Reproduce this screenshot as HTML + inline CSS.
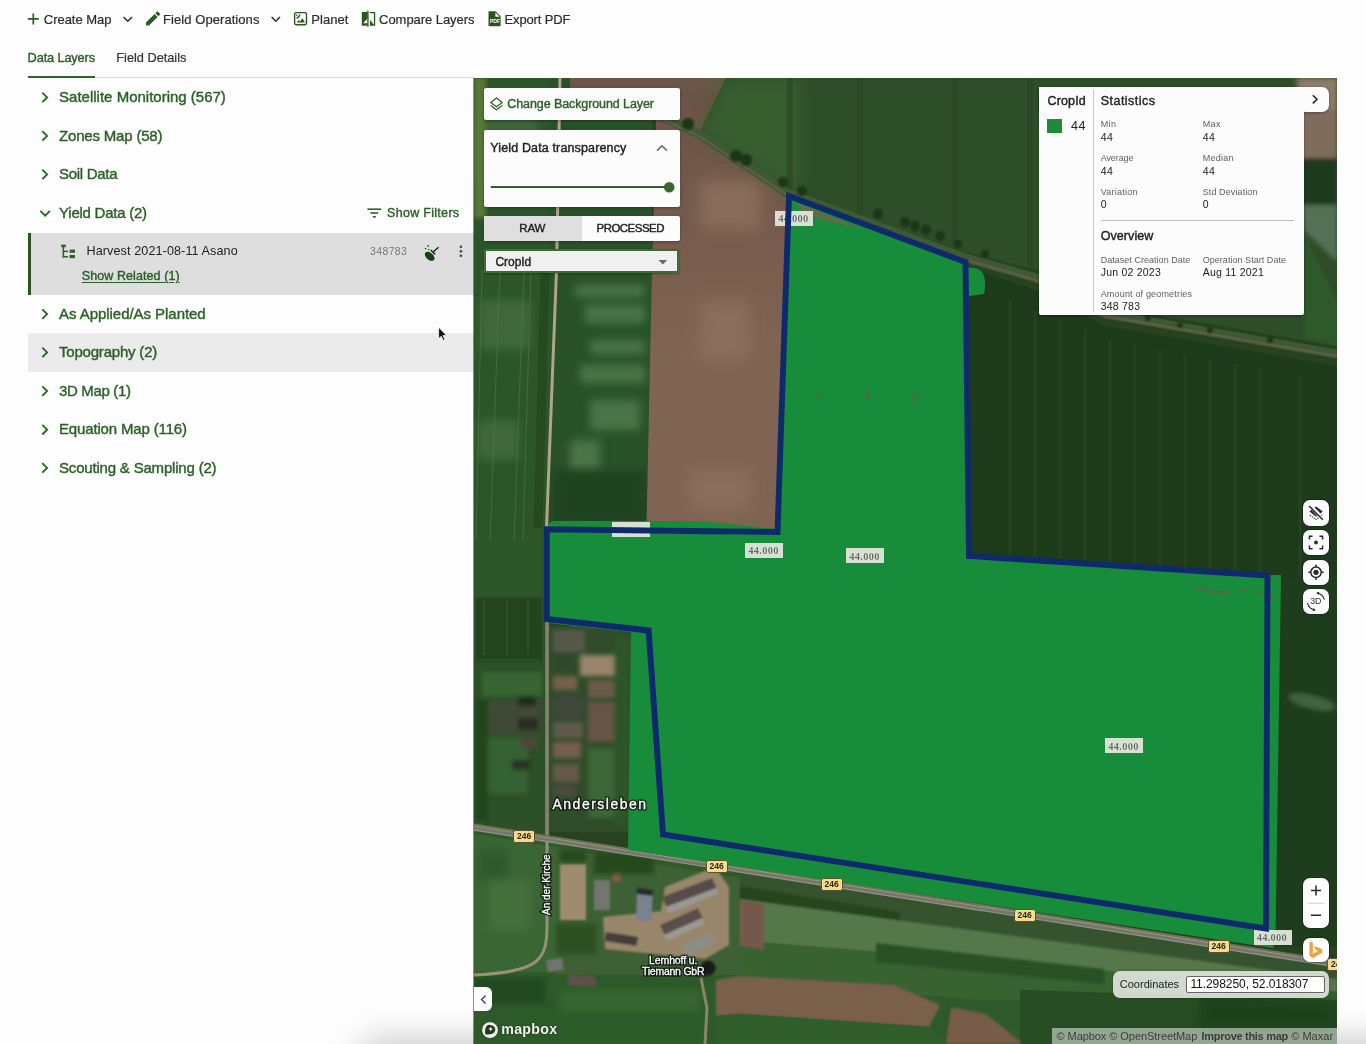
<!DOCTYPE html>
<html lang="en">
<head>
<meta charset="utf-8">
<title>Field Map</title>
<style>
html,body{margin:0;padding:0;}
body{width:1366px;height:1044px;position:relative;overflow:hidden;background:#fdfdfd;font-family:"Liberation Sans",sans-serif;}
.a{position:absolute;}
.t{position:absolute;white-space:pre;line-height:1;font-family:"Liberation Sans",sans-serif;}
.m{-webkit-text-stroke:0.4px currentColor;}
.m2{-webkit-text-stroke:0.2px currentColor;}
svg{position:absolute;overflow:visible;}
.btn{position:absolute;background:#fdfdfd;border-radius:7px;box-shadow:0 0 0 1px rgba(0,0,0,.22);}
.panel{position:absolute;border-radius:2px;background:#fcfcfc;box-shadow:0 1px 3px rgba(0,0,0,.35);}
</style>
</head>
<body>
<div id="root" style="position:absolute;left:0;top:0;width:1366px;height:1044px;will-change:transform;">
<!-- toolbar icons -->
<svg class="a" style="left:0;top:0" width="600" height="40" viewBox="0 0 600 40">
  <g fill="none" stroke="#2c5a24" stroke-width="1.7">
    <path d="M33.3 13.4V24.4M27.8 18.9H38.8"/>
  </g>
  <g fill="none" stroke="#2b2b2b" stroke-width="1.5">
    <path d="M123.6 17l4.2 4.2 4.2-4.2"/>
    <path d="M271.6 17l4.2 4.2 4.2-4.2"/>
  </g>
  <!-- pencil -->
  <g fill="#2c5a24">
    <path d="M146 25.6v-3l8.6-8.6 3 3-8.600 8.600zM155.400 13.200l1.400-1.400a1 1 0 0 1 1.400 0l1.600 1.600a1 1 0 0 1 0 1.400l-1.400 1.400z"/>
  </g>
  <!-- planet/image icon -->
  <g fill="none" stroke="#2c5522" stroke-width="1.4">
    <rect x="294.6" y="12.6" width="11.900" height="12.100" rx="1.600"/>
    <path d="M299.900 14.400a4.600 4.600 0 0 1-3.400 3.900" stroke-width="1.200"/>
  </g>
  <circle cx="296.800" cy="15.300" r=".8" fill="#2c5522"/>
  <path fill="#2c5522" d="M296.900 22.500l1.700-2.500 1.300 1.600 2.400-3.300 2.800 4.200z"/>
  <!-- compare icon -->
  <g fill="#2c5522">
    <path d="M361.800 12h5.600v13.700h-5.600z"/>
    <rect x="367.200" y="10.700" width="1.400" height="16"/>
    <path d="M370 19.700l3.900 5.300h-3.900z"/>
  </g>
  <path fill="#fdfdfd" d="M363.200 23.200l4-4.500v4.500z"/>
  <path d="M369.900 12.650h4.650v12.400h-4.650" fill="none" stroke="#2c5522" stroke-width="1.300"/>
  <!-- pdf icon -->
  <path fill="#2c5522" d="M489.300 11.200h6.300l5 5v9.200a.8.800 0 0 1-.8.800h-10.500a.8.800 0 0 1-.8-.8v-13.400a.8.800 0 0 1 .8-.8z"/>
  <path fill="#fdfdfd" d="M495.400 12.600v4.200h4.200z"/>
</svg>
<span class="t" style="left:489.900px;top:19.300px;font-size:5.200px;font-weight:700;color:#fdfdfd;letter-spacing:-.1px">PDF</span>

<!-- tabs line -->
<div class="a" style="left:28px;top:77px;width:446px;height:1px;background:#dcdcdc"></div>
<div class="a" style="left:28px;top:75.5px;width:67px;height:2.5px;background:#2d6428"></div>

<!-- rows -->
<div class="a" style="left:28px;top:233px;width:446px;height:62px;background:#dedede"></div>
<div class="a" style="left:28px;top:233px;width:2.6px;height:62px;background:#2b5220"></div>
<div class="a" style="left:28px;top:333px;width:446px;height:38.5px;background:#ebebeb"></div>

<svg class="a" style="left:0;top:80px" width="480" height="420" viewBox="0 80 480 420">
  <g fill="none" stroke="#2d6428" stroke-width="1.9">
    <path d="M42.3 92.6l4.8 4.8-4.8 4.8"/>
    <path d="M42.3 131.1l4.8 4.8-4.8 4.8"/>
    <path d="M42.3 169.6l4.8 4.8-4.8 4.8"/>
    <path d="M40.4 210.8l4.8 4.8 4.8-4.8"/>
    <path d="M42.3 309.3l4.8 4.8-4.8 4.8"/>
    <path d="M42.3 347.6l4.8 4.8-4.8 4.8"/>
    <path d="M42.3 386.3l4.8 4.8-4.8 4.8"/>
    <path d="M42.3 424.9l4.8 4.8-4.8 4.8"/>
    <path d="M42.3 463.1l4.8 4.8-4.8 4.8"/>
  </g>
  <!-- filter icon -->
  <g fill="#2d6428">
    <rect x="367.4" y="208.4" width="13.7" height="1.6"/>
    <rect x="370.4" y="212.2" width="7.8" height="1.6"/>
    <rect x="372.8" y="216" width="3" height="1.6"/>
  </g>
  <!-- tree icon -->
  <g fill="#2d6428">
    <rect x="61.2" y="244.6" width="4.6" height="2.6"/>
    <rect x="62.6" y="247" width="1.5" height="10.5"/>
    <rect x="62.6" y="250.6" width="5.4" height="1.5"/>
    <rect x="62.6" y="256" width="5.4" height="1.5"/>
    <rect x="69.6" y="249.6" width="5.4" height="3.2"/>
    <rect x="69.6" y="255" width="5.4" height="3.2"/>
  </g>
  <!-- brush icon -->
  <g fill="#1b3d1a">
    <ellipse cx="429.700" cy="256.300" rx="5.700" ry="3.500" transform="rotate(42 429.700 256.300)"/>
    <circle cx="428.200" cy="245.900" r=".8"/><circle cx="425.600" cy="248.600" r=".8"/><circle cx="428.800" cy="249.500" r=".7"/>
  </g>
  <path d="M430.600 250L435.200 254.400M433 252.100L438.600 247.300" stroke="#1b3d1a" stroke-width="1.500" fill="none"/>
  <!-- dots -->
  <g fill="#4a4a4a"><circle cx="460.9" cy="246.8" r="1.35"/><circle cx="460.9" cy="251.3" r="1.35"/><circle cx="460.9" cy="255.8" r="1.35"/></g>
  <!-- cursor -->
  <path d="M438.6 327.2v11.6l2.7-2.5 1.9 4.3 1.8-.8-1.9-4.2h3.7z" fill="#111" stroke="#fff" stroke-width=".8"/>
</svg>
<!-- bottom shade -->
<div class="a" style="left:372px;top:1054px;width:1076px;height:30px;border-radius:30px;box-shadow:0 0 30px 18px rgba(0,0,0,.18)"></div>
<!-- map -->
<div class="a" style="left:474px;top:78px;width:863px;height:966px;overflow:hidden;background:#26421f">
<svg style="left:0;top:0" width="863" height="966" viewBox="474 78 863 966">
  <defs>
    <linearGradient id="brg" x1="0" y1="78" x2="0" y2="532" gradientUnits="userSpaceOnUse"><stop offset="0" stop-color="#6a5246"/><stop offset=".35" stop-color="#775c4d"/><stop offset=".6" stop-color="#7f6453"/><stop offset="1" stop-color="#7f6453"/></linearGradient>
    <filter id="b2" x="-10%" y="-10%" width="120%" height="120%"><feGaussianBlur stdDeviation="2"/></filter>
    <filter id="b4" x="-10%" y="-10%" width="120%" height="120%"><feGaussianBlur stdDeviation="4"/></filter>
    <filter id="b8" x="-20%" y="-20%" width="140%" height="140%"><feGaussianBlur stdDeviation="8"/></filter>
    <filter id="b1" x="-10%" y="-10%" width="120%" height="120%"><feGaussianBlur stdDeviation="0.8"/></filter>
  </defs>
  <!-- far-left strip -->
  <rect x="474" y="78" width="76" height="760" fill="#2c5529"/>
  <g filter="url(#b4)" fill="#4a7045" opacity=".7">
    <rect x="478" y="120" width="60" height="60"/><rect x="480" y="300" width="50" height="50"/><rect x="478" y="420" width="40" height="40"/>
  </g>
  <g stroke="#55774d" stroke-width="1" opacity=".6"><path d="M482 270L476 540M500 270L490 540M524 270L514 540M531 270L523 540"/></g>
  <rect x="474" y="78" width="12" height="140" fill="#587838" filter="url(#b2)"/>
  <!-- left field -->
  <rect x="550" y="78" width="102" height="450" fill="#29512a"/>
  <g filter="url(#b4)" fill="#527d4f" opacity=".8">
    <rect x="575" y="285" width="70" height="12"/><rect x="585" y="305" width="60" height="18"/>
    <rect x="590" y="340" width="55" height="14"/><rect x="580" y="365" width="65" height="18"/>
    <rect x="590" y="400" width="50" height="30"/><rect x="570" y="440" width="30" height="30"/>
  </g>
  <rect x="552" y="470" width="96" height="56" fill="#1f3d1d" opacity=".7" filter="url(#b4)"/>
  <!-- hedge along track -->
  <path d="M545 270L538 528" stroke="#25471f" stroke-width="9" opacity=".8"/>
  <!-- track -->
  <path d="M560 78L556.5 270L546.5 528" stroke="#b3a389" stroke-width="3" fill="none"/>
  <!-- brown field -->
  <path d="M657 78H726L699 134L787 195L777 532L646.5 527L652 270L656 120Z" fill="url(#brg)"/>
  <path d="M570 78H726L720 90H570Z" fill="#6b5748"/>
  <g filter="url(#b8)" fill="#8d725f" opacity=".8">
    <rect x="700" y="300" width="50" height="60"/><rect x="690" y="470" width="60" height="40"/><rect x="700" y="180" width="60" height="50"/>
  </g>
  <!-- upper right field -->
  <path d="M726 78H1337V346L1105 306L1036 270L966 252L788 190L699 134Z" fill="#2e4e29"/>
  <path d="M726 78H800V196L699 134Z" fill="#3a6230" filter="url(#b8)" opacity=".8"/>
  <g stroke="#26431f" stroke-width="6" opacity=".5"><path d="M790 78V190M860 78V215M955 78V245M1030 78V270"/></g>
  <!-- hedge / track band -->
  <path d="M660 116L699 134L787 193L966 258L1036 278L1105 314L1337 354" stroke="#3d5a35" stroke-width="9" fill="none"/>
  <path d="M660 118L699 136L787 195L966 260L1036 280L1105 316L1337 356" stroke="#5d5c46" stroke-width="2.500" fill="none"/>
  <g fill="#1b3418" filter="url(#b1)">
    <circle cx="688" cy="124" r="6"/><circle cx="736" cy="156" r="6"/><circle cx="746" cy="160" r="6"/><circle cx="783" cy="182" r="5"/><circle cx="802" cy="191" r="5"/>
    <circle cx="878" cy="214" r="5"/><circle cx="905" cy="222" r="5"/><circle cx="915" cy="226" r="5"/><circle cx="926" cy="230" r="5"/><circle cx="940" cy="236" r="5"/><circle cx="958" cy="244" r="4"/><circle cx="985" cy="254" r="4"/>
    <circle cx="1148" cy="318" r="3"/><circle cx="1180" cy="325" r="3"/><circle cx="1210" cy="330" r="3"/><circle cx="1270" cy="340" r="3"/>
  </g>
  <!-- right strip near stats -->
  <g filter="url(#b2)">
    <path d="M1296 78H1337V165H1300Z" fill="#7f6d5c"/>
    <path d="M1300 78H1337V110H1300Z" fill="#8c7b69"/>
    <path d="M1300 158H1337V205H1300Z" fill="#1f3a1c"/>
    <path d="M1302 205H1337V262L1304 230Z" fill="#556f55"/>
    <path d="M1304 235L1337 300V345L1304 338Z" fill="#2f5a2a"/>
  </g>
  <!-- dark right field -->
  <path d="M969 268L1036 290L1105 326L1337 366V600H1268V577L969 556Z" fill="#1d3a1b"/>
  <g stroke="#2c4a28" stroke-width="3" opacity=".5"><path d="M1010 300V555M1035 310V557M1060 320V559M1085 330V560M1110 340V562M1135 345V564M1160 350V566M1185 355V568M1210 360V570M1235 364V572M1260 368V574M1300 376V600"/></g>
  <!-- right strip -->
  <rect x="1268" y="577" width="69" height="370" fill="#1e3d1c"/>
  <ellipse cx="1312" cy="702" rx="24" ry="7" transform="rotate(14 1312 702)" fill="#50704a" opacity=".75" filter="url(#b2)"/>
  <path d="M1290 585V940" stroke="#2b4a27" stroke-width="8" opacity=".6" filter="url(#b2)"/>
  <!-- village -->
  <rect x="474" y="596" width="72" height="240" fill="#2c5028"/>
  <rect x="550" y="626" width="84" height="206" fill="#304c2a"/>
  <rect x="476" y="598" width="66" height="64" fill="#22441f"/>
  <g stroke="#3a5f35" stroke-width="1.200" opacity=".8"><path d="M484 600V655M507 600V655M528 600V655M476 660H540"/></g>
  <g filter="url(#b2)">
    <rect x="482" y="672" width="60" height="24" fill="#376633"/>
    <rect x="484" y="700" width="58" height="34" fill="#3f4a36"/>
    <rect x="484" y="738" width="44" height="56" fill="#346230"/>
    <rect x="476" y="700" width="12" height="120" fill="#24451f"/>
    <rect x="580" y="655" width="36" height="21" fill="#97846a"/>
    <rect x="588" y="680" width="26" height="18" fill="#6b5a48"/>
    <rect x="588" y="702" width="26" height="40" fill="#665446"/>
    <rect x="588" y="748" width="26" height="70" fill="#3a6634"/>
    <rect x="553" y="630" width="32" height="22" fill="#54584a"/>
    <rect x="553" y="656" width="24" height="16" fill="#2f4a2a"/>
    <rect x="553" y="676" width="24" height="14" fill="#75604a"/>
    <rect x="553" y="696" width="30" height="22" fill="#40463a"/>
    <rect x="553" y="722" width="30" height="16" fill="#5f594c"/>
    <rect x="553" y="742" width="28" height="16" fill="#74604e"/>
    <rect x="553" y="764" width="26" height="18" fill="#66584a"/>
    <rect x="553" y="786" width="22" height="10" fill="#4f4a40"/>
    <rect x="518" y="696" width="18" height="10" fill="#222c1d"/>
    <rect x="518" y="718" width="20" height="12" fill="#262f22"/>
    <rect x="520" y="738" width="18" height="10" fill="#4e463a"/>
    <rect x="512" y="760" width="18" height="10" fill="#2a3324"/>
    <rect x="614" y="636" width="15" height="190" fill="#2d5529"/>
  </g>
  <!-- village road -->
  <path d="M547 616V838" stroke="#85846f" stroke-width="3.600"/>
  <!-- below the road -->
  <path d="M474 830L1337 967V1044H474Z" fill="#2f5a2a"/>
  <path d="M474 834L560 848V972H474Z" fill="#3a6634"/>
  <g filter="url(#b4)"><rect x="490" y="880" width="40" height="50" fill="#4a7440" opacity=".7"/><rect x="478" y="850" width="30" height="30" fill="#2c5629" opacity=".8"/></g>
  <path d="M556 848L740 878V975H556Z" fill="#3d6034"/>
  <path d="M740 873L1337 968V990L740 900Z" fill="#35532e"/>
  <path d="M740 886L900 912V922L740 899Z" fill="#25441f" filter="url(#b1)"/>
  <path d="M740 899L1337 979V992L1000 962L740 941Z" fill="#55774a" filter="url(#b1)"/>
  <path d="M740 941L1000 962L1337 992V1030L740 980Z" fill="#38622f"/>
  <path d="M876 943L1104 969V984L876 962Z" fill="#2a5127" filter="url(#b1)"/>
  <path d="M740 900L764 904V950L740 946Z" fill="#75594b" filter="url(#b1)"/>
  <path d="M474 976H716V1044H474Z" fill="#2c5a28"/>
  <path d="M474 978H545V1004H474Z" fill="#234a20" filter="url(#b2)"/>
  <path d="M560 990H700V1012H560Z" fill="#3a6a34" filter="url(#b4)" opacity=".8"/>
  <path d="M716 1000H1337V1044H716Z" fill="#2d5a29"/>
  <path d="M1020 990L1337 1000V1044H1020Z" fill="#264d23"/>
  <path d="M1200 996L1337 1002V1030H1200Z" fill="#1f421e" filter="url(#b4)"/>
  <path d="M716 980L740 976L894 985L940 1005L929 1027L740 1014L716 1016Z" fill="#7a5e4c" filter="url(#b1)"/>
  <path d="M951 1007L986 1014L1021 1042L1020 1044H946Z" fill="#765c4a" filter="url(#b1)"/>
  <path d="M716 1016L740 1014L929 1027L946 1044H716Z" fill="#2f5e2a"/>
  <!-- farm -->
  <g filter="url(#b1)">
    <path d="M560 864h26v56h-26z" fill="#9f8c6c"/>
    <path d="M603 917l58-6 4-24 50-20 14 20v58l-24 14-100-10z" fill="#98866b"/>
    <path d="M594 880h16v30h-16z" fill="#74746f"/>
    <path d="M637 890l16 2-2 30-15-2z" fill="#7b8190"/>
    <path d="M637 888l16 2-.5 6-16-2z" fill="#2b2b30"/>
    <path d="M662 897l50-19 4.500 10-50 19z" fill="#574b49"/>
    <path d="M666 907l50-19 2.500 6-50 19z" fill="#999892"/>
    <path d="M660 925l38-17 4.500 10-38 17z" fill="#5a4e4b"/>
    <path d="M664 935l38-17 2.500 6-38 17z" fill="#9a9993"/>
    <path d="M682 945l28-13 5 11-28 13z" fill="#8c8d86"/>
    <path d="M606 932l32 5-1.500 9-32-5z" fill="#463c3b"/>
    <path d="M611 862l8-1 2 20-8 1z" fill="#8a5a48"/>
    <circle cx="708" cy="968" r="7.500" fill="#181f16"/>
    <path d="M546 960l16-2 2 12-16 2z" fill="#6f7370"/>
    <path d="M568 975l28 1v10h-28z" fill="#5d5048"/>
  </g>
  <g filter="url(#b2)" fill="#28481f"><rect x="560" y="850" width="26" height="12"/><rect x="594" y="852" width="60" height="22"/><rect x="556" y="924" width="40" height="30" opacity=".7"/></g>
  <path d="M547 838V925C547 960 540 972 474 975" stroke="#9a9078" stroke-width="3" fill="none"/>
  <path d="M701 978L707 1008L705 1044" stroke="#8d8468" stroke-width="3" fill="none"/>
  <!-- road 246 -->
  <path d="M474 824.500L1337 961.500" stroke="#6f7158" stroke-width="2"/>
  <path d="M474 828L1337 965" stroke="#96947f" stroke-width="5.200"/>
  <path d="M474 828L1337 965" stroke="#74766f" stroke-width="2.800"/>

  <!-- yield fill -->
  <path d="M788 196L965 262L969 268C985 266 987 280 984 294L969 296V556L1268 575H1281L1275.500 938L1273 948L628 850L631 632L649 631L648 634L548 623V524L552 521H700L777 529Z" fill="#178c3a"/>
  <!-- outline -->
  <path d="M797 203L862 229L815 217.500L800 210.500Z" fill="#66684a"/>
  <!-- small marks -->
  <g fill="#6b5a4a"><ellipse cx="819" cy="397" rx="1" ry="3.5"/><ellipse cx="867" cy="395" rx="1.2" ry="5"/><ellipse cx="915" cy="398" rx="1" ry="6"/></g>
  <path d="M1196 588l14 2 2 4 3-3 14 2M1240 590l6 1M1254 591l5 1M1262 593l8 2 2 4" stroke="#6b5a4a" stroke-width="1.6" fill="none"/>
</svg>
</div>
<!-- overlays -->
<div class="a" style="left:473.400px;top:78px;width:1px;height:966px;background:rgba(40,55,40,.55)"></div>
<!-- value labels -->
<div class="a vl" style="left:774.7px;top:210.6px"></div>
<div class="a vl" style="left:612px;top:522px"></div>
<div class="a vl" style="left:744.600px;top:542.500px"></div>
<div class="a vl" style="left:846px;top:548.400px"></div>
<div class="a vl" style="left:1105px;top:738px"></div>
<div class="a vl" style="left:1253.5px;top:929.6px"></div>
<style>
.vl{width:38.400px;height:15px;background:rgba(224,228,217,.96);}
.vt{position:absolute;font-family:"Liberation Serif",serif;font-weight:700;font-size:10.400px;line-height:1;color:#636861;letter-spacing:.3px;white-space:pre;text-shadow:0 0 1px #fff,0 0 1px #fff;}
.rl{position:absolute;width:20px;height:10.5px;background:#f4dc8c;border:1px solid #5a5030;border-radius:2.5px;}
.rt{position:absolute;font-weight:700;font-size:8.5px;line-height:1;color:#2a2618;white-space:pre;}
</style>
<span class="vt" style="left:778.2px;top:214.1px">44.000</span>
<span class="vt" style="left:748.3px;top:545.5px">44.000</span>
<span class="vt" style="left:849.3px;top:551.5px">44.000</span>
<span class="vt" style="left:1108.3px;top:741.5px">44.000</span>
<span class="vt" style="left:1256.7px;top:933.1px">44.000</span>
<!-- outline on top of labels -->
<svg class="a" style="left:474px;top:78px;overflow:hidden" width="863" height="966" viewBox="474 78 863 966">
  <path d="M789 196L965.500 262L969 556L1267.500 575.500L1266 928.500L663 834.500L648.600 630.500L546.800 619L546.800 529.300L777.500 532Z" fill="none" stroke="#0f2a6c" stroke-width="5.900" stroke-linejoin="miter"/>
</svg>

<!-- road labels -->
<div class="rl" style="left:513px;top:830px"></div><span class="rt" style="left:517px;top:832.2px">246</span>
<div class="rl" style="left:705.5px;top:860px"></div><span class="rt" style="left:709.5px;top:862.2px">246</span>
<div class="rl" style="left:820.5px;top:878px"></div><span class="rt" style="left:824.5px;top:880.2px">246</span>
<div class="rl" style="left:1013.5px;top:909px"></div><span class="rt" style="left:1017.5px;top:911.2px">246</span>
<div class="rl" style="left:1207.5px;top:940px"></div><span class="rt" style="left:1211.5px;top:942.2px">246</span>
<div class="a" style="left:1327px;top:958px;width:10px;height:12.5px;overflow:hidden"><div class="rl" style="left:0;top:0"></div><span class="rt" style="left:4px;top:2.2px">246</span></div>

<!-- place labels -->
<span class="t" style="left:552.500px;top:797.300px;font-size:14px;letter-spacing:1.500px;color:rgba(10,15,10,.8);-webkit-text-stroke:3px rgba(10,15,10,.8);">Andersleben</span>
<span class="t" style="left:552.500px;top:797.300px;font-size:14px;letter-spacing:1.500px;color:#fff;-webkit-text-stroke:.3px #fff;">Andersleben</span>
<span class="t" style="left:649px;top:955.300px;font-size:10.5px;letter-spacing:-.1px;color:rgba(10,15,10,.8);-webkit-text-stroke:3px rgba(10,15,10,.8);">Lemhoff u.</span>
<span class="t" style="left:649px;top:955.300px;font-size:10.5px;letter-spacing:-.1px;color:#fff;-webkit-text-stroke:.3px #fff;">Lemhoff u.</span>
<span class="t" style="left:642px;top:966px;font-size:10.5px;letter-spacing:-.25px;color:rgba(10,15,10,.8);-webkit-text-stroke:3px rgba(10,15,10,.8);">Tiemann GbR</span>
<span class="t" style="left:642px;top:966px;font-size:10.5px;letter-spacing:-.25px;color:#fff;-webkit-text-stroke:.3px #fff;">Tiemann GbR</span>
<span class="t" style="left:542px;top:915px;font-size:10px;color:rgba(10,15,10,.8);-webkit-text-stroke:3px rgba(10,15,10,.8);transform:rotate(-90deg);transform-origin:0 0;">An der Kirche</span>
<span class="t" style="left:542px;top:915px;font-size:10px;color:#fff;-webkit-text-stroke:.3px #fff;transform:rotate(-90deg);transform-origin:0 0;">An der Kirche</span>

<!-- left map panels -->
<div class="panel" style="left:484px;top:87.5px;width:195.5px;height:32.5px"></div>
<div class="panel" style="left:484px;top:130px;width:196px;height:77px"></div>
<div class="panel" style="left:484px;top:216px;width:196px;height:25.3px"></div>
<div class="a" style="left:484px;top:216px;width:97.5px;height:25.3px;background:#dfdfdf"></div>
<div class="a" style="left:484px;top:249.3px;width:195px;height:24px;background:#f0f0f0;border:2px solid #3f6d33;box-sizing:border-box;box-shadow:0 1px 2px rgba(0,0,0,.3)"></div>
<svg class="a" style="left:474px;top:78px" width="220" height="210" viewBox="474 78 220 210">
  <!-- layers icon -->
  <g fill="none" stroke="#2d6428" stroke-width="1.3" stroke-linejoin="round">
    <path d="M496.5 98l5.8 4.4-5.8 4.4-5.8-4.4z"/>
    <path d="M490.7 105.4l5.8 4.4 5.8-4.4"/>
  </g>
  <!-- chevron up -->
  <path d="M657 150.6l4.9-4.9 4.9 4.9" fill="none" stroke="#666" stroke-width="1.5"/>
  <!-- slider -->
  <rect x="490.8" y="186.1" width="178" height="1.9" fill="#2c5524"/>
  <circle cx="669.2" cy="187.2" r="5.3" fill="#38682f"/>
  <!-- caret -->
  <path d="M658.4 260l4.4 4.4 4.4-4.4z" fill="#6a6a6a"/>
</svg>

<!-- stats panel -->
<div class="a" style="left:1038.5px;top:86.8px;width:290.2px;height:25px;background:#fcfcfc;border-radius:0 7px 7px 0;box-shadow:0 1px 3px rgba(0,0,0,.35)"></div>
<div class="panel" style="left:1038.5px;top:86.8px;width:265.2px;height:228.5px"></div>
<div class="a" style="left:1038.5px;top:87.8px;width:288px;height:23px;background:#fcfcfc;border-radius:0 7px 7px 0"></div>
<div class="a" style="left:1093px;top:90px;width:1px;height:222px;background:#c9c9c9"></div>
<div class="a" style="left:1100.5px;top:219.6px;width:193.5px;height:1px;background:#bdbdbd"></div>
<div class="a" style="left:1047.3px;top:118.8px;width:14.7px;height:14.2px;background:#1d8b3a"></div>
<svg class="a" style="left:1308px;top:92px" width="14" height="14" viewBox="1308 92 14 14"><path d="M1312.8 95.2l4.2 4.1-4.2 4.1" fill="none" stroke="#222" stroke-width="1.5"/></svg>

<!-- right buttons -->
<div class="btn" style="left:1303.3px;top:500.2px;width:25.4px;height:25.4px"></div>
<div class="btn" style="left:1303.3px;top:529.8px;width:25.4px;height:25.4px"></div>
<div class="btn" style="left:1303.3px;top:559.6px;width:25.4px;height:25.4px"></div>
<div class="btn" style="left:1303.3px;top:589.1px;width:25.4px;height:25.4px"></div>
<svg class="a" style="left:1300px;top:496px" width="32" height="124" viewBox="1300 496 32 124">
  <!-- layers-off -->
  <path d="M1309 506L1322.800 519.800" stroke="#222" stroke-width="1.500" fill="none"/>
  <g fill="#2a2a2a">
    <path d="M1314.500 507.600l1.700-1.100 6.600 5-2.400 1.900z"/>
    <path d="M1309.400 511.400l2-1.600 6 6.200-1.500.6z"/>
    <circle cx="1310.400" cy="515.500" r=".7"/><circle cx="1312.300" cy="516.900" r=".7"/><circle cx="1314.200" cy="518.300" r=".7"/><circle cx="1316" cy="519.500" r=".7"/><circle cx="1317.900" cy="518.300" r=".7"/><circle cx="1321.600" cy="515.200" r=".6"/>
  </g>
  <!-- focus -->
  <g fill="none" stroke="#2a2a2a" stroke-width="1.5">
    <path d="M1309.4 539.4v-3.2h3.2M1319.4 536.2h3.2v3.2M1322.6 545.6v3.2h-3.2M1312.6 548.8h-3.2v-3.2"/>
  </g>
  <circle cx="1316" cy="542.5" r="1.9" fill="#2a2a2a"/>
  <!-- locate -->
  <circle cx="1316" cy="572.3" r="5.2" fill="none" stroke="#2a2a2a" stroke-width="1.5"/>
  <circle cx="1316" cy="572.3" r="2.6" fill="#2a2a2a"/>
  <path d="M1316 564.6v2.6M1316 577.4v2.6M1308.3 572.3h2.6M1321.1 572.3h2.6" stroke="#2a2a2a" stroke-width="1.5"/>
  <!-- 3D -->
  <path d="M1317.600 593.200A8.500 8.500 0 0 1 1324.300 599.700M1307.600 603A8.500 8.500 0 0 0 1314.400 609.800" fill="none" stroke="#2a2a2a" stroke-width="1.150"/>
  <path d="M1316.200 592.700l3.200-.9-.9 3.200zM1315.800 610.300l-3.200.9.900-3.200z" fill="#2a2a2a"/>
</svg>
<span class="t" style="left:1310.300px;top:597.400px;font-size:8.800px;color:#333;letter-spacing:-.3px">3D</span>

<!-- zoom control -->
<div class="btn" style="left:1303.2px;top:878.2px;width:25.5px;height:50px"></div>
<div class="btn" style="left:1303.2px;top:937.5px;width:25.5px;height:24.3px"></div>
<svg class="a" style="left:1300px;top:875px" width="32" height="90" viewBox="1300 875 32 90">
  <path d="M1316 885.6v10M1311 890.6h10M1311 915.3h10" stroke="#2a2a2a" stroke-width="1.5" fill="none"/>
  <rect x="1308" y="902.8" width="16" height=".8" fill="#c8c8c8"/>
  <!-- bing -->
  <path d="M1309.5 941.2l3.4 1.2v11.4l5-2.8-2.4-1.2-1.5-3.8 8.2 2.9v3.8l-9.2 5.3-3.5-2z" fill="#eda23c"/>
</svg>

<!-- coordinates -->
<div class="a" style="left:1112.8px;top:971.3px;width:216px;height:26.5px;background:rgba(222,226,220,.93);border-radius:7px;box-shadow:0 0 2px rgba(0,0,0,.3)"></div>
<div class="a" style="left:1186.3px;top:975.6px;width:138.4px;height:17.8px;background:#fdfdfd;border:1px solid #666;box-sizing:border-box;border-radius:2px"></div>

<!-- attribution -->
<div class="a" style="left:1052px;top:1028px;width:285px;height:16px;background:rgba(255,255,255,.5)"></div>


<!-- collapse button -->
<div class="a" style="left:474px;top:987.3px;width:18.3px;height:23.7px;background:#fdfdfd;border-radius:0 6px 6px 0"></div>
<svg class="a" style="left:474px;top:985px" width="100" height="59" viewBox="474 985 100 59">
  <path d="M485.6 995.4l-4.1 4.1 4.1 4.1" fill="none" stroke="#444" stroke-width="1.4"/>
  <!-- mapbox logo -->
  <circle cx="490" cy="1030.100" r="8.300" fill="#f1f1f1" stroke="rgba(10,25,10,.55)" stroke-width="1"/>
  <path d="M491.200 1025.300a4.200 4.200 0 0 1 2.900 7.200c-2.300 2.300-6.200 2.100-8.700 1.700c-.4-2.500-.600-6.400 1.700-8.700a4.200 4.200 0 0 1 4.100-.2z" fill="#1d3a1b"/>
  <path d="M490.700 1026.700l.75 1.650 1.650.75-1.650.75-.75 1.650-.75-1.650-1.650-.75 1.650-.75z" fill="#f1f1f1"/>
</svg>
<span class="t" style="left:501.300px;top:1021.900px;font-size:14.200px;font-weight:700;color:#f1f1f1;letter-spacing:.28px;text-shadow:0 0 1.500px rgba(0,20,0,.8)">mapbox</span>

<!-- texts -->
<span class="t m2" style="left:43.80px;top:12.95px;font-size:13px;letter-spacing:-0.036px;color:#2b2b2b;">Create Map</span>
<span class="t m2" style="left:163.10px;top:12.95px;font-size:13px;letter-spacing:0.061px;color:#2b2b2b;">Field Operations</span>
<span class="t m2" style="left:311.30px;top:12.95px;font-size:13px;letter-spacing:0.025px;color:#2b2b2b;">Planet</span>
<span class="t m2" style="left:379.10px;top:12.95px;font-size:13px;letter-spacing:-0.055px;color:#2b2b2b;">Compare Layers</span>
<span class="t m2" style="left:504.50px;top:12.95px;font-size:13px;letter-spacing:-0.132px;color:#2b2b2b;">Export PDF</span>
<span class="t m" style="left:27.60px;top:52.12px;font-size:12.8px;letter-spacing:-0.150px;color:#2b5f27;">Data Layers</span>
<span class="t m2" style="left:116.30px;top:52.12px;font-size:12.8px;letter-spacing:-0.027px;color:#333;">Field Details</span>
<span class="t m" style="left:59.10px;top:89.15px;font-size:15px;letter-spacing:0.001px;color:#2b5f27;">Satellite Monitoring (567)</span>
<span class="t m" style="left:59.10px;top:127.65px;font-size:15px;letter-spacing:-0.192px;color:#2b5f27;">Zones Map (58)</span>
<span class="t m" style="left:59.10px;top:166.15px;font-size:15px;letter-spacing:-0.309px;color:#2b5f27;">Soil Data</span>
<span class="t m" style="left:59.10px;top:204.65px;font-size:15px;letter-spacing:-0.243px;color:#2b5f27;">Yield Data (2)</span>
<span class="t m" style="left:59.00px;top:305.85px;font-size:15px;letter-spacing:-0.045px;color:#2b5f27;">As Applied/As Planted</span>
<span class="t m" style="left:59.00px;top:344.05px;font-size:15px;letter-spacing:-0.200px;color:#2b5f27;">Topography (2)</span>
<span class="t m" style="left:59.00px;top:382.75px;font-size:15px;letter-spacing:-0.348px;color:#2b5f27;">3D Map (1)</span>
<span class="t m" style="left:59.00px;top:421.35px;font-size:15px;letter-spacing:-0.155px;color:#2b5f27;">Equation Map (116)</span>
<span class="t m" style="left:59.00px;top:459.55px;font-size:15px;letter-spacing:-0.189px;color:#2b5f27;">Scouting &amp; Sampling (2)</span>
<span class="t m" style="left:387.00px;top:206.68px;font-size:12.5px;letter-spacing:0.302px;color:#2b5f27;">Show Filters</span>
<span class="t " style="left:86.50px;top:244.99px;font-size:12.6px;letter-spacing:0.100px;color:#222;">Harvest 2021-08-11 Asano</span>
<span class="t " style="left:370.10px;top:246.47px;font-size:10.5px;letter-spacing:0.351px;color:#777;">348783</span>
<span class="t m" style="left:81.80px;top:269.97px;font-size:12.5px;letter-spacing:0.081px;color:#2b5f27;text-decoration:underline;text-underline-offset:2px;">Show Related (1)</span>
<span class="t m" style="left:507.30px;top:98.28px;font-size:12.5px;letter-spacing:-0.092px;color:#2b5f27;">Change Background Layer</span>
<span class="t m" style="left:490.30px;top:142.08px;font-size:12.5px;letter-spacing:0.138px;color:#222;">Yield Data transparency</span>
<span class="t m" style="left:519.30px;top:222.93px;font-size:11.5px;letter-spacing:-0.203px;color:#222;">RAW</span>
<span class="t m" style="left:596.50px;top:222.93px;font-size:11.5px;letter-spacing:-0.527px;color:#222;">PROCESSED</span>
<span class="t m" style="left:495.50px;top:256.20px;font-size:12px;letter-spacing:-0.046px;color:#222;">CropId</span>
<span class="t m" style="left:1047.50px;top:94.78px;font-size:12.5px;letter-spacing:0.154px;color:#222;">CropId</span>
<span class="t " style="left:1070.90px;top:119.78px;font-size:12.5px;letter-spacing:0.694px;color:#222;">44</span>
<span class="t m" style="left:1100.70px;top:94.78px;font-size:12.5px;letter-spacing:0.476px;color:#222;">Statistics</span>
<span class="t " style="left:1100.70px;top:120.05px;font-size:9px;letter-spacing:0.392px;color:#606060;">Min</span>
<span class="t " style="left:1100.70px;top:131.78px;font-size:10.5px;letter-spacing:0.412px;color:#222;">44</span>
<span class="t " style="left:1202.70px;top:120.05px;font-size:9px;letter-spacing:0.392px;color:#606060;">Max</span>
<span class="t " style="left:1202.70px;top:131.78px;font-size:10.5px;letter-spacing:0.412px;color:#222;">44</span>
<span class="t " style="left:1100.70px;top:154.05px;font-size:9px;letter-spacing:-0.093px;color:#606060;">Average</span>
<span class="t " style="left:1100.70px;top:165.78px;font-size:10.5px;letter-spacing:0.412px;color:#222;">44</span>
<span class="t " style="left:1202.70px;top:154.05px;font-size:9px;letter-spacing:0.254px;color:#606060;">Median</span>
<span class="t " style="left:1202.70px;top:165.78px;font-size:10.5px;letter-spacing:0.412px;color:#222;">44</span>
<span class="t " style="left:1100.70px;top:187.75px;font-size:9px;letter-spacing:0.243px;color:#606060;">Variation</span>
<span class="t " style="left:1100.70px;top:199.47px;font-size:10.5px;letter-spacing:0.456px;color:#222;">0</span>
<span class="t " style="left:1202.70px;top:187.75px;font-size:9px;letter-spacing:0.106px;color:#606060;">Std Deviation</span>
<span class="t " style="left:1202.70px;top:199.47px;font-size:10.5px;letter-spacing:0.456px;color:#222;">0</span>
<span class="t m" style="left:1100.70px;top:230.28px;font-size:12.5px;letter-spacing:0.072px;color:#222;">Overview</span>
<span class="t " style="left:1100.70px;top:255.75px;font-size:9px;letter-spacing:0.028px;color:#606060;">Dataset Creation Date</span>
<span class="t " style="left:1100.70px;top:267.47px;font-size:10.5px;letter-spacing:0.229px;color:#222;">Jun 02 2023</span>
<span class="t " style="left:1202.70px;top:255.75px;font-size:9px;letter-spacing:0.040px;color:#606060;">Operation Start Date</span>
<span class="t " style="left:1202.70px;top:267.47px;font-size:10.5px;letter-spacing:0.232px;color:#222;">Aug 11 2021</span>
<span class="t " style="left:1100.70px;top:289.55px;font-size:9px;letter-spacing:0.171px;color:#606060;">Amount of geometries</span>
<span class="t " style="left:1100.70px;top:301.27px;font-size:10.5px;letter-spacing:0.222px;color:#222;">348 783</span>
<span class="t " style="left:1119.80px;top:979.05px;font-size:11px;letter-spacing:-0.003px;color:#222;">Coordinates</span>
<span class="t " style="left:1190.40px;top:978.20px;font-size:12px;letter-spacing:-0.065px;color:#111;">11.298250, 52.018307</span>
<span class="t " style="left:1056.50px;top:1031.35px;font-size:11px;letter-spacing:-0.060px;color:#3c3c3c;">© Mapbox © OpenStreetMap</span>
<span class="t " style="left:1201.60px;top:1031.35px;font-size:11px;letter-spacing:-0.299px;color:#3c3c3c;font-weight:700;">Improve this map</span>
<span class="t " style="left:1291.20px;top:1031.35px;font-size:11px;letter-spacing:0.028px;color:#3c3c3c;">© Maxar</span>
</div>
</body>
</html>
